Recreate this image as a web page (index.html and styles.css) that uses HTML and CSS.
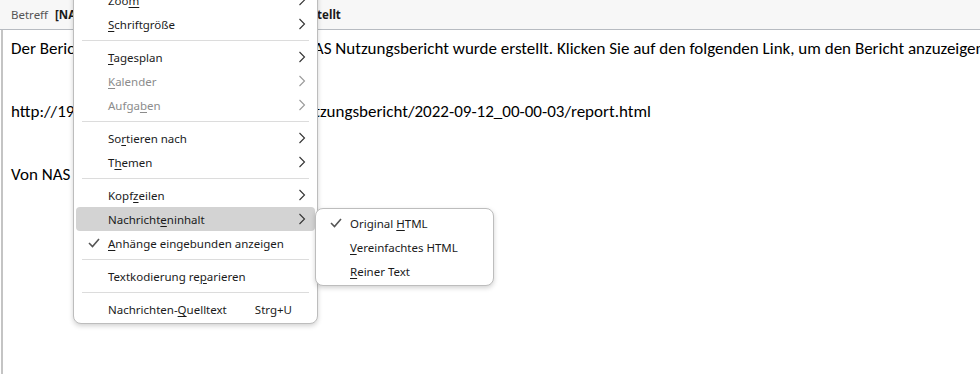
FILE: index.html
```html
<!DOCTYPE html>
<html lang="de">
<head>
    <meta charset="UTF-8">
    <title>Nachricht - NAS Nutzungsbericht</title>
    <link rel="stylesheet" href="styles.css">
</head>
<body>

    <div class="header">
        <span class="label">Betreff</span>
        <span class="subject">[NAS Nutzungsbericht]: Der Bericht wurde erstellt</span>
    </div>

    <div class="message">
        <p>Der Bericht zur geplanten Aufgabe für das NAS Nutzungsbericht wurde erstellt. Klicken Sie auf den folgenden Link, um den Bericht anzuzeigen.</p>
        <p>http://192.168.1.20:5000/NAS_Berichte/Nutzungsbericht/2022-09-12_00-00-03/report.html</p>
        <p>Von NAS</p>
    </div>

    <div class="menu main-menu">
        <div class="item">
            <span class="text">Zoo<u>m</u></span>
            <svg class="arrow" viewBox="0 0 8 12"><polyline points="1.5,1 6.5,6 1.5,11"/></svg>
        </div>
        <div class="item">
            <span class="text"><u>S</u>chriftgröße</span>
            <svg class="arrow" viewBox="0 0 8 12"><polyline points="1.5,1 6.5,6 1.5,11"/></svg>
        </div>
        <div class="sep"></div>
        <div class="item">
            <span class="text"><u>T</u>agesplan</span>
            <svg class="arrow" viewBox="0 0 8 12"><polyline points="1.5,1 6.5,6 1.5,11"/></svg>
        </div>
        <div class="item disabled">
            <span class="text"><u>K</u>alender</span>
            <svg class="arrow" viewBox="0 0 8 12"><polyline points="1.5,1 6.5,6 1.5,11"/></svg>
        </div>
        <div class="item disabled">
            <span class="text">Aufga<u>b</u>en</span>
            <svg class="arrow" viewBox="0 0 8 12"><polyline points="1.5,1 6.5,6 1.5,11"/></svg>
        </div>
        <div class="sep"></div>
        <div class="item">
            <span class="text">So<u>r</u>tieren nach</span>
            <svg class="arrow" viewBox="0 0 8 12"><polyline points="1.5,1 6.5,6 1.5,11"/></svg>
        </div>
        <div class="item">
            <span class="text">T<u>h</u>emen</span>
            <svg class="arrow" viewBox="0 0 8 12"><polyline points="1.5,1 6.5,6 1.5,11"/></svg>
        </div>
        <div class="sep"></div>
        <div class="item">
            <span class="text">Kopf<u>z</u>eilen</span>
            <svg class="arrow" viewBox="0 0 8 12"><polyline points="1.5,1 6.5,6 1.5,11"/></svg>
        </div>
        <div class="item hover">
            <span class="text">Nachricht<u>e</u>ninhalt</span>
            <svg class="arrow" viewBox="0 0 8 12"><polyline points="1.5,1 6.5,6 1.5,11"/></svg>
        </div>
        <div class="item">
            <svg class="check" viewBox="0 0 12 10"><polyline points="1,5 4.5,8.5 11,1"/></svg>
            <span class="text"><u>A</u>nhänge eingebunden anzeigen</span>
        </div>
        <div class="sep"></div>
        <div class="item">
            <span class="text">Textkodierung re<u>p</u>arieren</span>
        </div>
        <div class="sep"></div>
        <div class="item">
            <span class="text">Nachrichten-<u>Q</u>uelltext</span>
            <span class="shortcut">Strg+U</span>
        </div>
    </div>

    <div class="menu submenu">
        <div class="item">
            <svg class="check" viewBox="0 0 12 10"><polyline points="1,5 4.5,8.5 11,1"/></svg>
            <span class="text">Original <u>H</u>TML</span>
        </div>
        <div class="item">
            <span class="text"><u>V</u>ereinfachtes HTML</span>
        </div>
        <div class="item">
            <span class="text"><u>R</u>einer Text</span>
        </div>
    </div>

</body>
</html>
```

FILE: styles.css
```css
body {
    margin: 0;
    width: 980px;
    height: 374px;
    overflow: hidden;
    position: relative;
    background: #fff;
    font-family: Carlito, Calibri, "Liberation Sans", sans-serif;
}
.header {
    height: 29px;
    background: #f7f7f7;
    border-bottom: 1px solid #b7bbc1;
    display: flex;
    align-items: center;
    padding-left: 11px;
    font-family: "Segoe UI", "Noto Sans", sans-serif;
    font-size: 11.5px;
    white-space: nowrap;
}
.label {
    color: #555;
    margin-right: 7px;
}
.subject {
    font-weight: bold;
    color: #1a1a1a;
}
.message {
    border-left: 2px solid #c4c4c4;
    height: 344px;
    margin-left: 1px;
    padding: 8px 0 0 8px;
    font-size: 17px;
    line-height: 21px;
    color: #000;
    white-space: nowrap;
}
.message p {
    margin: 0 0 42px 0;
}

/* context menus */
.menu {
    position: absolute;
    background: #fff;
    border: 1px solid #bdbdbd;
    border-radius: 8px;
    box-shadow: 0 2px 5px rgba(0, 0, 0, 0.18);
    padding: 3px 2px;
    font-family: "Segoe UI", "Noto Sans", sans-serif;
    font-size: 11.5px;
    color: #1b1b1b;
}
.main-menu {
    left: 73px;
    top: -16px;
    width: 239px;
    padding-bottom: 2px;
}
.submenu {
    left: 315px;
    top: 208px;
    width: 173px;
    padding-top: 2px;
    padding-bottom: 2px;
}
.item {
    height: 24px;
    display: flex;
    align-items: center;
    padding: 0 9px 0 32px;
    position: relative;
    border-radius: 4px;
}
.item .text {
    flex: 1;
}
.item u {
    text-underline-offset: 2px;
}
.item.disabled {
    color: #8c8c8c;
}
.item.hover {
    background: #d3d3d3;
}
.sep {
    height: 1px;
    background: #dcdcdc;
    margin: 4px 6px;
}
.arrow {
    width: 8px;
    height: 12px;
    fill: none;
    stroke: #333;
    stroke-width: 1.1;
}
.disabled .arrow {
    stroke: #9a9a9a;
}
.check {
    position: absolute;
    left: 12px;
    top: 7px;
    width: 12px;
    height: 10px;
    fill: none;
    stroke: #555;
    stroke-width: 1.6;
}
.shortcut {
    margin-right: 14px;
}
```
